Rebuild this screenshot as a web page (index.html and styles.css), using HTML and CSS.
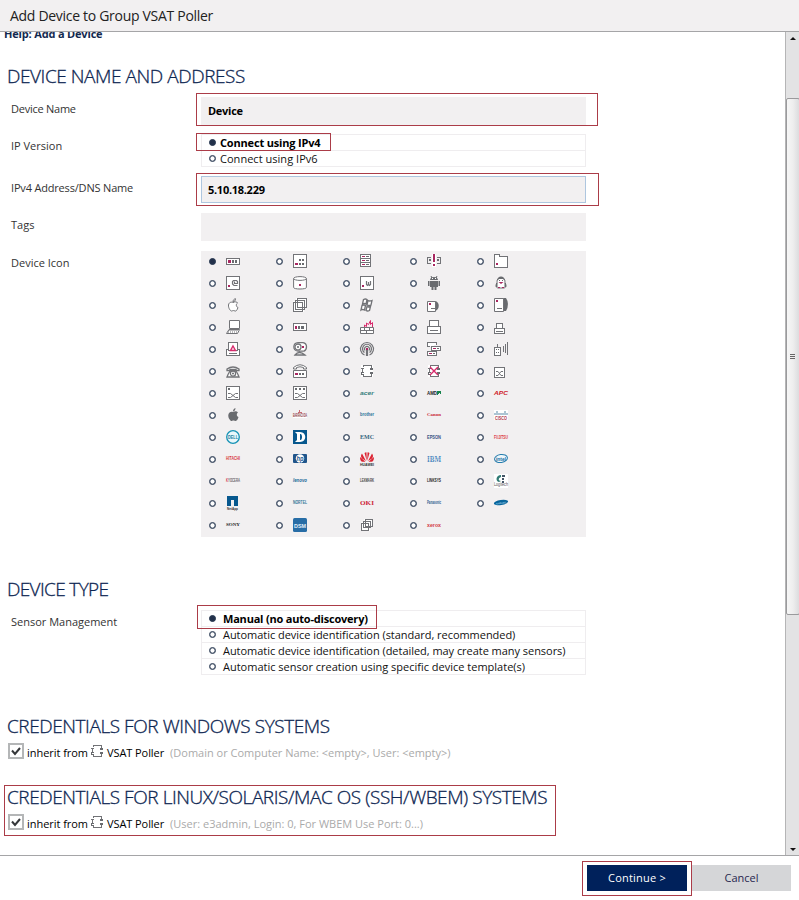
FILE: index.html
```html
<!DOCTYPE html>
<html lang="en">
<head>
<meta charset="utf-8">
<title>Add Device to Group VSAT Poller</title>
<link rel="stylesheet" href="styles.css">
</head>
<body>
<div class="dialog">
<header class="titlebar"><span>Add Device to Group VSAT Poller</span></header>
<div class="body">
<main class="content">
<a class="help">Help: Add a Device</a>

<section class="sec-address">
<h2 class="t-address">DEVICE NAME AND ADDRESS</h2>
<div class="row r-name"><label class="l1">Device Name</label><div class="field mark m-name"><span>Device</span></div></div>
<div class="row r-ip"><label class="l2">IP Version</label>
<div class="options ip">
<div class="option on"><i class="radio"></i><b class="o1">Connect using IPv4</b><div class="frame f-ip"></div></div>
<div class="option"><i class="radio"></i><span class="o2">Connect using IPv6</span></div>
</div></div>
<div class="row r-dns"><label class="l3">IPv4 Address/DNS Name</label><div class="field focus mark m-dns"><span>5.10.18.229</span></div></div>
<div class="row r-tags"><label class="l4">Tags</label><div class="field"></div></div>
<div class="row r-icons"><label class="l5">Device Icon</label>
<div class="icons">
<div class="cell on"><i class="radio"></i><svg><rect class="w" x=".5" y="4.5" width="13" height="6"/><path class="m" d="M2 6h3v3H2z"/><path class="g" d="M6 6h2v3H6zM9 6h2v3H9z"/></svg></div>
<div class="cell"><i class="radio"></i><svg><rect class="w" x=".5" y=".5" width="13" height="13"/><path class="g" d="M6 5h2v2H6zM9 5h2v2H9zM6 9h2v2H6zM9 9h2v2H9z"/><path class="m" d="M2 9h3v2H2z"/></svg></div>
<div class="cell"><i class="radio"></i><svg><path class="w" d="M.5 .5h10v12H.5zM.5 4.5h10M.5 8.5h10"/><path class="m" d="M2 2h3v1H2zM2 6h3v1H2zM2 10h3v1H2z"/><path class="g" d="M6 2h3v1H6zM6 6h3v1H6zM6 10h3v1H6z"/></svg></div>
<div class="cell"><i class="radio"></i><svg><path class="wf" d="M5 0h4v13H5z"/><path d="M4 3.500H.5v6H4M10 3.500h3.500v6H10"/><path class="g" d="M2 5h2v2H2zM10 5h2v2h-2z"/><path class="m" d="M6 0h2v8H6zM6 10h2v2H6z"/></svg></div>
<div class="cell"><i class="radio"></i><svg><path class="w" d="M.5 .5H5.500V2.500H13.500V13.500H.5z"/><path class="m" d="M2 9h2v2H2z"/></svg></div>

<div class="cell"><i class="radio"></i><svg><rect class="w" x=".5" y=".5" width="13" height="13"/><path class="soft" stroke-width="1.200" d="M11.500 9.500H8L6.500 8V5.500L7.500 4.500h3l1 1v2h-3v-2"/><path class="m" d="M2 9h2v2H2z"/></svg></div>
<div class="cell"><i class="radio"></i><svg class="soft"><path class="w" d="M.6 2.500v9c0 2 12.800 2 12.800 0v-9"/><ellipse class="w" cx="7" cy="2.500" rx="6.400" ry="1.900"/><path class="m" d="M6 8h2v2H6z"/></svg></div>
<div class="cell"><i class="radio"></i><svg><rect class="w" x=".5" y=".5" width="13" height="13"/><path class="soft" stroke-width="1.200" d="M6.500 5v3.500l1 1 1-1V6M8.500 8.500l1 1 1-1V5"/><path class="m" d="M2 9h2v2H2z"/></svg></div>
<div class="cell"><i class="radio"></i><svg class="soft"><path class="g" d="M3 4c0-4 8-4 8 0zM3 5h8v6H3zM1 5h1.500v5H1zM11.500 5H13v5h-1.500zM4.500 11h2v3h-2zM7.500 11h2v3h-2zM3.500 0l1 0 1 2h-1zM9.500 0h1l-1 2h-1z"/><path class="wf" d="M5 2h1v1H5zM8 2h1v1H8z"/></svg></div>
<div class="cell"><i class="radio"></i><svg class="soft"><path class="w" d="M3 7C2 -.5 12 -.5 11 7c2 3 1 4.500-1 5H4C2 11.500 1 10 3 7z"/><path class="g" d="M3 5c0-6 8-6 8 0L9 3H5zM2 7h1.500v4H2zM10.500 7H12v4h-1.500zM5 4h1v1H5zM8 4h1v1H8z"/><path class="m" d="M4.500 6h5L7 8zM4 11h2v1H4zM8 11h2v1H8z"/></svg></div>

<div class="cell"><i class="radio"></i><svg class="soft"><path class="w" d="M7 4.500c2-1 4-.8 4.500.5-2 1.500-1.200 4 .5 4.500-1 3-2 3.800-3 3.500-1.300-.6-2-.6-3 0C4.500 13.500 2.200 10 2.500 7c.5-3 3-3.200 4.500-2.500z"/><path d="M7 4c0-2 1-3 2.500-3.300C9.500 2.500 8.500 3.700 7 4z"/></svg></div>
<div class="cell"><i class="radio"></i><svg><path class="wf" d="M0 3h3V0h11v9h-3v5H0z"/><path d="M2.500 2.500h9v9h-9zM4.500 .5h9v9h-9zM.5 4.500h9v9h-9z"/></svg></div>
<div class="cell"><i class="radio"></i><svg class="soft"><path class="w" stroke-width="1.300" d="M3.500 1.500q2-1 3.500 0l-1 4.500q-2-1-3.500 0zM8 2.500q1.500 1 4 0l-1 4.500q-2 1-4 0zM2 7.500q2-1 3.500 0l-1 4.500q-2-1-3.500 0zM7 8.500q1.500 1 3.500 0l-1 4q-2 1-3.500 0z"/></svg></div>
<div class="cell"><i class="radio"></i><svg class="soft"><path class="g" d="M8 3c5 .5 5 9 0 10z"/><path class="w" d="M.5 3.500h8v10h-8z"/><path class="m" d="M2 5h2v2H2z"/><path d="M4 10.500h4"/></svg></div>
<div class="cell"><i class="radio"></i><svg class="soft"><path class="g" d="M9 0h3q4 6 0 13H9z"/><path class="w" d="M.5 .5h9v13h-9z"/><path class="m" d="M2 2h2v2H2z"/><path d="M3 10.500h5"/></svg></div>

<div class="cell"><i class="radio"></i><svg class="soft"><path class="w" d="M3.500 .5h10v8h-10zM3 9.500h10.500l-2 4H.5z"/><path stroke-dasharray="1 1" d="M2.500 10.500h10M2 12h10"/></svg></div>
<div class="cell"><i class="radio"></i><svg><rect class="w" x=".5" y="3.500" width="13" height="7"/><path class="m" d="M2 6h2v3H2z"/><path class="g" d="M5 6h2v3H5zM8 6h3v3H8z"/></svg></div>
<div class="cell"><i class="radio"></i><svg class="soft"><path class="pinkline" d="M4.500 7.500V5l2 1.500V3l2 1.500 2-4v4l2-2V7"/><path class="w" d="M.5 7.500h13v6H.5zM.5 10.500h13M4.500 7.500v3M9.500 7.500v3M6.500 10.500v3"/></svg></div>
<div class="cell"><i class="radio"></i><svg><path class="w" d="M2.500 .5h9v6h-9zM.5 6.500h13v6.500H.5zM3 10.500h8"/></svg></div>
<div class="cell"><i class="radio"></i><svg><path class="w" d="M2.500 3.500h6v5h-6zM.5 8.500h10v5H.5zM2 11.500h7"/></svg></div>

<div class="cell"><i class="radio"></i><svg><path class="w" d="M2.500 .5h9v8h-9zM3 7.500H.5v6h13v-6H11M3 11.500h8"/><path class="pinkline soft" stroke-width="1.400" d="M7 4l2.500 4.500h-5z"/></svg></div>
<div class="cell"><i class="radio"></i><svg class="soft"><path class="w" stroke-width="1.300" d="M5 .7h5c5 1 4 7 1 8.500H5C-1 8 0 1 5 .7zM2 13q4-5 10 0z"/><circle cx="5" cy="5" r="3" stroke-width="1.300"/><circle cx="5" cy="5" r="1" class="g"/><path class="m" d="M9 4h2v2H9z"/></svg></div>
<div class="cell"><i class="radio"></i><svg class="soft"><path stroke-width="1.200" d="M4.500 13A6.500 6.500 0 1 1 9.500 13M4.500 10.500a4.500 4.500 0 1 1 5 0M5 8.500a2.500 2.500 0 1 1 4 0M6.500 8v5.500h1V8"/><path class="m" d="M6 6h2v2H6z"/></svg></div>
<div class="cell"><i class="radio"></i><svg><path class="w" d="M9.500 3V.5H.5v4H3M4.500 4.500h9v4h-9zM.5 9.500h9v4H.5z"/><path class="m" d="M6 6h3v1H6zM2 11h3v1H2z"/><path class="g" d="M10 6h2v1h-2zM6 11h2v1H6z"/></svg></div>
<div class="cell"><i class="radio"></i><svg><path class="w" d="M.5 5.500h6v8h-6z"/><path d="M3.500 2v3M9.500 4v6M11.500 2v9M13.500 0v13"/><path class="g" d="M2 7h1v1H2zM4 7h1v1H4zM2 10h1v1H2zM4 10h1v1H4z"/></svg></div>

<div class="cell"><i class="radio"></i><svg class="soft"><path class="w" stroke-width="1.300" d="M1 6.500V5q6-4 12 0v1.500h-3V5.500H4v1zM4 7h6q2 3 3 6H1q1-3 3-6z"/><circle cx="7" cy="9.500" r="2.600" stroke-width="1.300"/><circle cx="7" cy="9.500" r="1" class="g"/></svg></div>
<div class="cell"><i class="radio"></i><svg class="soft"><path class="w" d="M.5 5V3.500q6.500-5.500 13 0V5h-3V3.500q-3.500-1.500-7 0V5zM.5 6.500h13v7H.5z"/><path class="m" d="M2 9h3v2H2z"/><path class="g" d="M6 9h2v2H6zM9 9h2v2H9z"/></svg></div>
<div class="cell"><i class="radio"></i><svg><use href="#switch"/></svg></div>
<div class="cell"><i class="radio"></i><svg><use href="#switch"/><path class="pinkline soft" stroke-width="1.400" d="M3 3l8 8M11 3l-8 8"/></svg></div>
<div class="cell"><i class="radio"></i><svg><path class="w" d="M.5 3.500h10v10H.5z"/><path class="soft" d="M2 7.500h2l3 4h2M2 11.500h2l3-4h2"/></svg></div>

<div class="cell"><i class="radio"></i><svg><path class="w" d="M.5 .5h13v13H.5z"/><path class="g" d="M2 2h2v2H2z"/><path class="soft" d="M2 7.500h2.500l5 4H12M2 11.500h2.500l5-4H12"/></svg></div>
<div class="cell"><i class="radio"></i><svg><path class="w" d="M.5 .5h13v13H.5z"/><path class="g" d="M2 2h2v2H2zM6 2h2v2H6zM10 2h2v2h-2z"/><path class="soft" d="M2 7.500h2.500l5 4H12M2 11.500h2.500l5-4H12"/></svg></div>
<div class="cell"><i class="radio"></i><svg><text x="0" y="9" textLength="14" lengthAdjust="spacingAndGlyphs" class="it mid" fill="#39817f">acer</text></svg></div>
<div class="cell"><i class="radio"></i><svg><text x="0" y="9" textLength="10" lengthAdjust="spacingAndGlyphs" fill="#222">AMD</text><path fill="#17834c" stroke="none" d="M10 5h4v4l-1.500-2-1.500 2h-1z"/></svg></div>
<div class="cell"><i class="radio"></i><svg><text x="0" y="9" textLength="14" lengthAdjust="spacingAndGlyphs" class="it mid" fill="#cf1928">APC</text></svg></div>

<div class="cell"><i class="radio"></i><svg class="soft"><path class="g" d="M7 4c2-1 4-.8 5 .5-2 1.500-1.200 4 .5 4.500-1 3.500-2.500 4.300-3.500 4-1.300-.6-2-.6-3 0C4.500 13.500 2 10 2.300 7c.5-3 3-3.800 4.700-3zM7 3.500C7 1.500 8 .6 9.500 0 9.500 2 8.500 3.200 7 3.500z"/></svg></div>
<div class="cell"><i class="radio"></i><svg class="soft"><path class="wf" d="M0 5h14v5H0z"/><path stroke="#c96a73" d="M6.500 2v3M5 4.500h4"/><text x="0" y="8.500" textLength="14" lengthAdjust="spacingAndGlyphs" class="four" fill="#842b33">BARRACUDA</text></svg></div>
<div class="cell"><i class="radio"></i><svg><text x="0" y="8" textLength="14" lengthAdjust="spacingAndGlyphs" fill="#276f98">brother</text></svg></div>
<div class="cell"><i class="radio"></i><svg><text x="0" y="8" textLength="14" lengthAdjust="spacingAndGlyphs" class="serif" fill="#c92735">Canon</text></svg></div>
<div class="cell"><i class="radio"></i><svg class="soft"><path class="wf" d="M0 2h14v10H0z"/><path stroke="#5b8ba8" d="M1 5v2M3 3v4M5 5v2M7 5v2M9 5v2M11 3v4M13 5v2"/><text x="1" y="11.500" textLength="12" lengthAdjust="spacingAndGlyphs" class="four" fill="#b03548">CISCO</text></svg></div>

<div class="cell"><i class="radio"></i><svg class="soft"><circle cx="7" cy="7" r="6.300" fill="#e9f7fb" stroke="#1592b5" stroke-width="1.300"/><text x="2" y="9" textLength="10" lengthAdjust="spacingAndGlyphs" fill="#16809e">DELL</text></svg></div>
<div class="cell"><i class="radio"></i><svg class="soft"><path fill="#07588e" stroke="none" d="M0 0h14v14H0z"/><path fill="#fff" stroke="none" d="M2 2h5c7 0 7 10 0 10H2l2-2V4z"/><path fill="#07588e" stroke="none" d="M7 4h.5c2 0 2 6 0 6H7z"/></svg></div>
<div class="cell"><i class="radio"></i><svg><text x="0" y="9" textLength="14" lengthAdjust="spacingAndGlyphs" class="serif mid" fill="#346780">EMC</text></svg></div>
<div class="cell"><i class="radio"></i><svg><text x="0" y="8.500" textLength="14" lengthAdjust="spacingAndGlyphs" fill="#385485">EPSON</text></svg></div>
<div class="cell"><i class="radio"></i><svg><text x="0" y="9" textLength="14" lengthAdjust="spacingAndGlyphs" class="mid" fill="#dc3542">FUJITSU</text></svg></div>

<div class="cell"><i class="radio"></i><svg><text x="0" y="8" textLength="14" lengthAdjust="spacingAndGlyphs" fill="#d83540">HITACHI</text></svg></div>
<div class="cell"><i class="radio"></i><svg class="soft"><rect x="0" y="2" width="14" height="9" rx="1" fill="#20558b" stroke="none"/><ellipse cx="7" cy="6.500" rx="4.200" ry="4.200" fill="#fff" stroke="none"/><text x="3.500" y="9" textLength="7" lengthAdjust="spacingAndGlyphs" class="it big" fill="#20558b">hp</text></svg></div>
<div class="cell"><i class="radio"></i><svg class="soft"><path fill="#dc2433" stroke="none" d="M6.800 9L4.500 1q1.500-1 2-.5zM7.200 9l2.300-8q-1.500-1-2-.5zM6 9L2 1.500Q0 4 2 6.500zM8 9l4-7.500q2 2.500 0 5zM5.500 9.700L0 5q0 5 3 4.700zM8.500 9.700L14 5q0 5-3 4.700z"/><text x="0" y="13.500" textLength="14" lengthAdjust="spacingAndGlyphs" class="small" fill="#333">HUAWEI</text></svg></div>
<div class="cell"><i class="radio"></i><svg><text x="0" y="9.500" textLength="14" lengthAdjust="spacingAndGlyphs" class="serif tall" fill="#4c88c0">IBM</text><path stroke="#f2f0f1" stroke-width=".3" class="soft" d="M0 5.500h14M0 7.500h14"/></svg></div>
<div class="cell"><i class="radio"></i><svg class="soft"><ellipse cx="7" cy="6.500" rx="6.500" ry="4" fill="#eef7fb" stroke="#267cad" transform="rotate(-8 7 6.500)"/><text x="2" y="8.500" textLength="10" lengthAdjust="spacingAndGlyphs" fill="#126aa0">intel</text></svg></div>

<div class="cell"><i class="radio"></i><svg><text x="0" y="8" textLength="14" lengthAdjust="spacingAndGlyphs" class="four" fill="#666"><tspan fill="#d4354c">K</tspan>YOCERA</text></svg></div>
<div class="cell"><i class="radio"></i><svg><text x="0" y="8" textLength="14" lengthAdjust="spacingAndGlyphs" class="it four" fill="#216998">lenovo</text></svg></div>
<div class="cell"><i class="radio"></i><svg><text x="0" y="8" textLength="14" lengthAdjust="spacingAndGlyphs" class="four" fill="#444">LEXMARK</text></svg></div>
<div class="cell"><i class="radio"></i><svg><text x="0" y="8" textLength="14" lengthAdjust="spacingAndGlyphs" class="four" fill="#222">LINKSYS</text></svg></div>
<div class="cell"><i class="radio"></i><svg class="soft"><path class="wf" d="M0 0h14v14H0z"/><path fill="#327b75" stroke="none" d="M7 1C2 1 1 7 5 8L7 7C4 7 4 4 7 3z"/><path fill="#456" stroke="none" d="M8 1h3v2H8zM8 4h2v2H8zM8 7h2v2H8z"/><text x="0" y="12" textLength="14" lengthAdjust="spacingAndGlyphs" class="four thin" fill="#555">Logitech</text></svg></div>

<div class="cell"><i class="radio"></i><svg><path fill="#07588e" stroke="none" d="M1 0h11v10H8V4H5v6H1z"/><text x="1" y="13.500" textLength="11" lengthAdjust="spacingAndGlyphs" class="small" fill="#333">NetApp</text></svg></div>
<div class="cell"><i class="radio"></i><svg><text x="0" y="8" textLength="14" lengthAdjust="spacingAndGlyphs" class="four" fill="#2f7496">NORTEL</text></svg></div>
<div class="cell"><i class="radio"></i><svg><text x="0" y="9" textLength="14" lengthAdjust="spacingAndGlyphs" class="serif mid" fill="#ce2637">OKI</text></svg></div>
<div class="cell"><i class="radio"></i><svg><text x="0" y="8" textLength="14" lengthAdjust="spacingAndGlyphs" class="four" fill="#1f568b">Panasonic</text></svg></div>
<div class="cell"><i class="radio"></i><svg class="soft"><ellipse cx="7" cy="6.500" rx="7.200" ry="2.500" fill="#07649b" stroke="none" transform="rotate(-9 7 6.500)"/><text x="2" y="8" textLength="10" lengthAdjust="spacingAndGlyphs" class="tiny" fill="#9dcbe2" transform="rotate(-9 7 6.500)">SAMSUNG</text></svg></div>

<div class="cell"><i class="radio"></i><svg><text x="0" y="8" textLength="14" lengthAdjust="spacingAndGlyphs" class="serif four" fill="#222">SONY</text></svg></div>
<div class="cell"><i class="radio"></i><svg class="soft"><rect width="14" height="14" rx="1.500" fill="#286da6" stroke="none"/><text x="1" y="9.500" textLength="12" lengthAdjust="spacingAndGlyphs" class="mid" fill="#e5f2fb">DSM</text></svg></div>
<div class="cell"><i class="radio"></i><svg><path class="wf" d="M1 4h3V1h9v8h-3v4H1z"/><path d="M5.500 1.500h7v7h-7zM3.500 3.500h7v6h-7zM1.500 5.500h7v7h-7z"/></svg></div>
<div class="cell"><i class="radio"></i><svg><text x="0" y="8.500" textLength="14" lengthAdjust="spacingAndGlyphs" fill="#d33c45">xerox</text></svg></div>
</div></div>
</section>

<section class="sec-type">
<h2 class="t-type">DEVICE TYPE</h2>
<div class="row r-sensor"><label class="l6">Sensor Management</label>
<div class="options sensor">
<div class="option on"><i class="radio"></i><b class="s1">Manual (no auto-discovery)</b><div class="frame f-manual"></div></div>
<div class="option"><i class="radio"></i><span class="s2">Automatic device identification (standard, recommended)</span></div>
<div class="option"><i class="radio"></i><span class="s3">Automatic device identification (detailed, may create many sensors)</span></div>
<div class="option"><i class="radio"></i><span class="s4">Automatic sensor creation using specific device template(s)</span></div>
</div></div>
</section>

<section class="cred win">
<h2 class="t-win">CREDENTIALS FOR WINDOWS SYSTEMS</h2>
<div class="inherit"><span class="check"><svg viewBox="0 0 10 10"><path d="M1 4.500L4 8 9 2"/></svg></span><span class="from">inherit from</span><svg class="group"><use href="#switch"/></svg><span class="poller">VSAT Poller</span><span class="hint h1">(Domain or Computer Name: &lt;empty&gt;, User: &lt;empty&gt;)</span></div>
</section>

<section class="cred linux">
<h2 class="t-linux">CREDENTIALS FOR LINUX/SOLARIS/MAC OS (SSH/WBEM) SYSTEMS</h2>
<div class="inherit"><span class="check"><svg viewBox="0 0 10 10"><path d="M1 4.500L4 8 9 2"/></svg></span><span class="from">inherit from</span><svg class="group"><use href="#switch"/></svg><span class="poller">VSAT Poller</span><span class="hint h2">(User: e3admin, Login: 0, For WBEM Use Port: 0...)</span></div>
</section>
</main>
<div class="scrollbar"><span class="arrow up"></span><span class="thumb"><i></i></span><span class="arrow down"></span></div>
</div>
<footer class="footer"><div class="primary"><span>Continue &gt;</span></div><div class="cancel"><span>Cancel</span></div></footer>
</div>
<svg class="defs"><defs><g id="switch"><path class="wf" d="M1 1h12v12H1z"/><path d="M3.500 3V1.500h8V4M2.500 5v3M11.500 10v2.500h-8V11M1 4.500h3"/><path class="g" d="M10 4h3v2h-3zM10 8h3v2h-3zM1 8h3v1H1zM1 10h3v1H1zM1 9h1v1H1z"/></g></defs></svg>
</body>
</html>
```
FILE: styles.css
```css
*, *::after { box-sizing: border-box; }
body { margin: 0; background: #fff; font: 11px/16px "Open Sans", "Noto Sans", sans-serif; color: #222; }
.dialog { width: 799px; height: 900px; display: flex; flex-direction: column; overflow: hidden; }
.titlebar { height: 32px; flex: none; background: #f2f0f1; border-bottom: 1px solid #a5a5a7; padding-left: 10px; font-size: 14px; line-height: 32px; letter-spacing: -.3px; white-space: nowrap; }
.body { height: 823px; flex: none; display: flex; }
.content { width: 785px; height: 823px; overflow: hidden; white-space: nowrap; display: flex; flex-direction: column; }
.help { display: block; height: 26px; margin-top: -6px; padding-left: 4px; flex: none; font-weight: 700; color: #13294f; line-height: 16px; letter-spacing: -.17px; }
section { flex: none; }
h2 { margin: 0; padding-left: 7px; font-size: 19px; font-weight: 300; line-height: 26px; height: 26px; color: #0c2551; letter-spacing: -.44px; -webkit-text-stroke: .3px #0c2551; }
.t-type { letter-spacing: -.65px; }
.sec-address { padding-top: 11px; }
.row { display: grid; grid-template-columns: 190px 385px; padding-left: 11px; align-items: start; }
.r-name { margin-top: 8px; }
.r-ip { margin-top: 9px; }
.r-dns { margin-top: 9px; }
.r-tags { margin-top: 10px; }
.r-icons { margin-top: 10px; }
label { color: #333; padding-top: 4px; }
.l1 { letter-spacing: -.25px; }
.l3 { letter-spacing: -.18px; }
.o1 { letter-spacing: -.17px; }
.o2 { letter-spacing: .03px; }
.s1 { letter-spacing: -.2px; }
.s2, .s3 { letter-spacing: -.04px; }
.field { height: 28px; background: #f2f0f1; padding: 0 7px; line-height: 28px; font-weight: 700; color: #000; letter-spacing: -.28px; }
.focus { height: 27px; border: 1px solid #aec6df; padding: 0 6px; line-height: 26px; }
.mark, .option, .linux, .primary { position: relative; }
.m-name::after, .m-dns::after, .linux::after, .primary::after, .frame { content: ""; position: absolute; border: 1px solid #ab3c48; pointer-events: none; }
.m-name::after { left: -5px; top: -4px; width: 402px; height: 33px; }
.m-dns::after { left: -6px; top: -4px; width: 403px; height: 33px; }
.options { border: 1px solid #efedef; border-bottom: 0; color: #111; }
.option { height: 16px; border-bottom: 1px solid #efedef; display: flex; align-items: center; padding-left: 7px; line-height: 16px; }
.option b { color: #000; }
.ip .option { gap: 4px; }
.sensor .option { gap: 7px; }
.radio { width: 7px; height: 7px; border: 1px solid #273750; box-shadow: inset 0 0 0 .3px #273750; border-radius: 50%; flex: none; background: #fff; }
.on > .radio { background: #22304a; }
.f-ip { left: -6px; top: -2px; width: 135px; height: 18px; }
.f-manual { left: -5px; top: -6px; width: 180px; height: 24px; }
.icons { width: 385px; background: #f2f0f1; display: grid; grid-template-columns: repeat(5, 67px); grid-auto-rows: 22px; }
.cell { display: flex; align-items: flex-start; gap: 10px; padding: 3px 0 0 8px; }
.cell .radio { margin-top: 4px; }
svg { width: 14px; height: 14px; flex: none; overflow: visible; fill: none; stroke: #727377; shape-rendering: crispEdges; }
.soft { shape-rendering: auto; }
.w { fill: #fff; }
.wf { fill: #fff; stroke: none; }
.g { fill: #696b6f; stroke: none; }
.m { fill: #a92861; stroke: none; }
.pinkline { stroke: #d72b6c; fill: #fbe7ee; }
text { stroke: none; font: 700 5px "Liberation Sans", sans-serif; }
.it { font-style: italic; }
.mid { font-size: 6px; }
.big { font-size: 6.500px; }
.tall { font-size: 9px; }
.four { font-size: 4.500px; }
.small { font-size: 3.500px; }
.tiny { font-size: 2.500px; }
.serif { font-family: "Liberation Serif", serif; }
.thin { font-weight: 400; }
.defs { position: absolute; width: 0; height: 0; }
.sec-type { padding-top: 39px; }
.r-sensor { margin-top: 8px; }
.cred { height: 71px; }
.win { margin-top: 38px; }
.inherit { display: flex; padding-left: 8px; height: 26px; align-items: center; color: #000; }
.inherit > span:not(.check) { padding-top: 1px; }
.check { width: 16px; height: 16px; border: 2px solid #b4b6b7; margin-right: 3px; margin-top: -2px; display: flex; align-items: center; justify-content: center; flex: none; }
.check svg { width: 10px; height: 10px; stroke: #35373a; stroke-width: 2; shape-rendering: auto; }
.from { letter-spacing: -.04px; }
.group { width: 14px; height: 14px; margin: -3px 3px 0 2px; }
.poller { letter-spacing: -.08px; }
.hint { color: #aaa; margin-left: 6px; }
.linux::after { left: 4px; top: 1px; width: 552px; height: 51px; }
.scrollbar { width: 14px; height: 823px; background: #e3e3e4; border-left: 1px solid #b5b5b6; display: flex; flex-direction: column; align-items: center; }
.arrow { border: 3px solid transparent; }
.up { border-bottom-color: #111; border-top: 0; margin-top: 5px; margin-bottom: 58px; }
.thumb { width: 14px; height: 517px; border: 1px solid #9a9a9c; border-radius: 2px; background: linear-gradient(90deg, #f6f6f6, #eee 50%, #dcdcde); display: flex; align-items: center; justify-content: center; }
.thumb i { width: 5px; height: 5px; background: repeating-linear-gradient(#666 0 1px, transparent 1px 2px); }
.down { border-top-color: #111; border-bottom: 0; margin-top: auto; margin-bottom: 4px; }
.footer { height: 45px; flex: none; border-top: 1px solid #a5a5a7; padding: 9px 8px 0 587px; display: flex; gap: 5px; font-size: 11px; letter-spacing: .2px; }
.primary { width: 100px; height: 26px; background: #00215b; color: #fff; line-height: 26px; text-align: center; }
.cancel { width: 99px; height: 26px; background: #d5d6d8; color: #27274f; line-height: 26px; text-align: center; letter-spacing: 0; }
.primary::after { left: -5px; top: -4px; width: 110px; height: 35px; }
```
